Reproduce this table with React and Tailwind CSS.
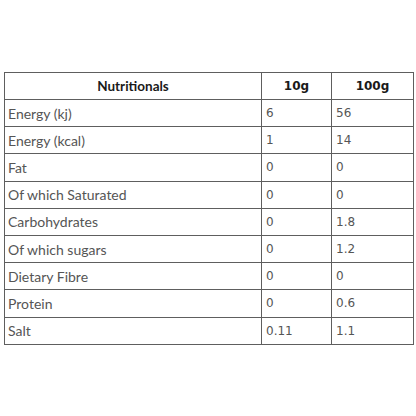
const rows = [
  ['Energy (kj)', '6', '56'],
  ['Energy (kcal)', '1', '14'],
  ['Fat', '0', '0'],
  ['Of which Saturated', '0', '0'],
  ['Carbohydrates', '0', '1.8'],
  ['Of which sugars', '0', '1.2'],
  ['Dietary Fibre', '0', '0'],
  ['Protein', '0', '0.6'],
  ['Salt', '0.11', '1.1'],
];

export default function App() {
  return (
    <div className="w-[416px] h-[416px] bg-white pt-[72px] pl-[4px]">
      <table className="border-collapse w-[409px] table-fixed">
        <colgroup>
          <col className="w-[257px]" />
          <col className="w-[70px]" />
          <col className="w-[82px]" />
        </colgroup>
        <thead>
          <tr className="h-[27px]">
            <th className="border border-[#5e5e5e] p-0 text-center text-[13.5px] font-bold text-[#1a1a1a] font-['Lato',sans-serif]">
              Nutritionals
            </th>
            <th className="border border-[#5e5e5e] p-0 text-center text-[12px] font-bold text-[#1a1a1a] font-['DejaVu_Sans',sans-serif]">
              10g
            </th>
            <th className="border border-[#5e5e5e] p-0 text-center text-[12px] font-bold text-[#1a1a1a] font-['DejaVu_Sans',sans-serif]">
              100g
            </th>
          </tr>
        </thead>
        <tbody>
          {rows.map((r) => (
            <tr key={r[0]} className="h-[27.2px]">
              <td className="border border-[#5e5e5e] py-0 pl-[3px] text-[14px] text-[#555] font-['Lato',sans-serif]">
                {r[0]}
              </td>
              <td className="border border-[#5e5e5e] py-0 pl-[4px] text-[12px] text-[#555] font-['DejaVu_Sans',sans-serif]">
                {r[1]}
              </td>
              <td className="border border-[#5e5e5e] py-0 pl-[4px] text-[12px] text-[#555] font-['DejaVu_Sans',sans-serif]">
                {r[2]}
              </td>
            </tr>
          ))}
        </tbody>
      </table>
    </div>
  );
}
